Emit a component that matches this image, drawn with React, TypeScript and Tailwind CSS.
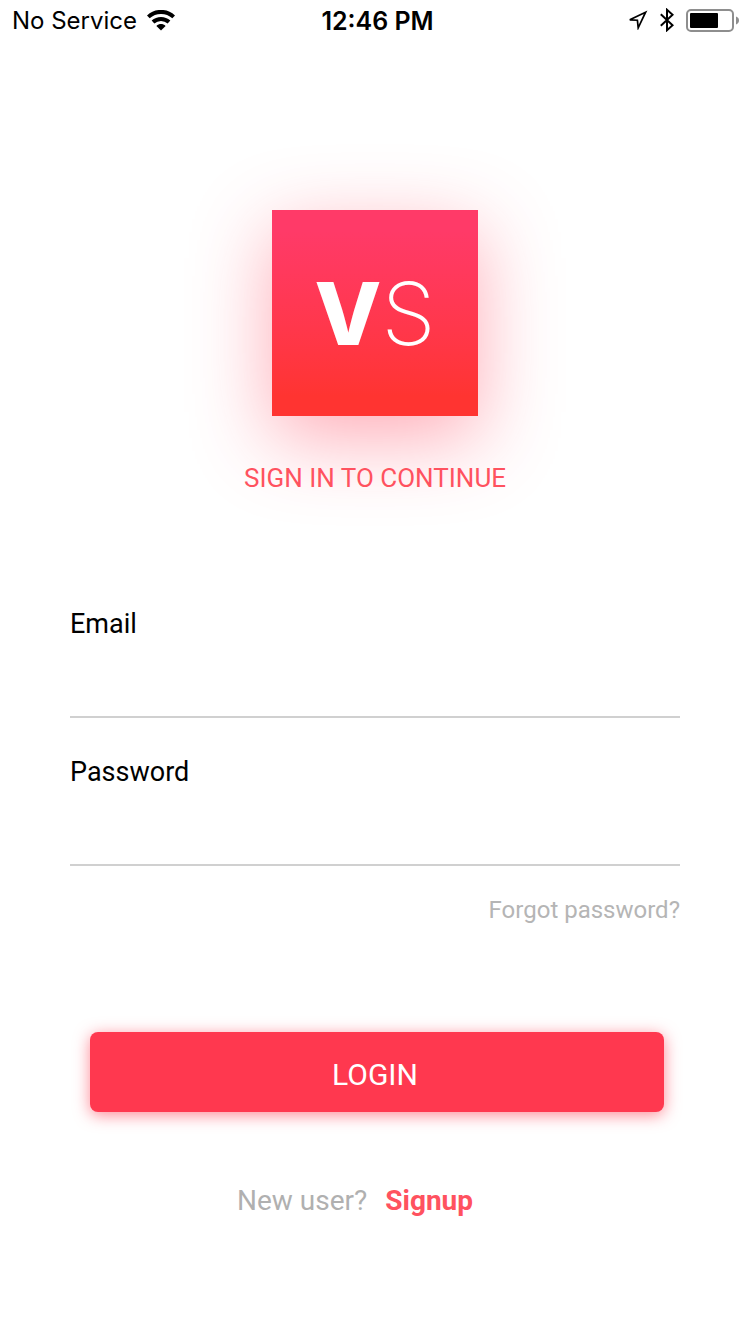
import type { ReactNode } from "react";

function WifiIcon() {
  return (
    <svg width="28" height="21" viewBox="0 0 28 21" aria-hidden="true">
      <g fill="none" stroke="#000" strokeWidth="4">
        <path d="M1.3 6.9C8.5 0.2 19.5 0.2 26.7 6.9" />
        <path d="M6 12.1C10.6 7.9 17.4 7.9 22 12.1" />
      </g>
      <path d="M14 20.4L9.4 16C12.1 13.4 15.9 13.4 18.6 16Z" fill="#000" />
    </svg>
  );
}

function LocationIcon() {
  return (
    <svg width="20" height="20" viewBox="0 0 20 20" aria-hidden="true">
      <path
        d="M17.6 2.2L1.8 9.8L9.4 10.2L10.2 17.8Z"
        fill="none"
        stroke="#000"
        strokeWidth="1.7"
      />
    </svg>
  );
}

function BluetoothIcon() {
  return (
    <svg width="14" height="24" viewBox="0 0 14 24" aria-hidden="true">
      <path
        d="M0.8 6.3L12.6 17.2L7 22.2V1.8L12.6 6.8L0.8 17.7"
        fill="none"
        stroke="#000"
        strokeWidth="2"
      />
    </svg>
  );
}

function BatteryIcon() {
  return (
    <svg width="53" height="24" viewBox="0 0 53 24" aria-hidden="true">
      <rect x="1" y="2" width="46" height="21" rx="4" fill="none" stroke="#8e8e8e" strokeWidth="2" />
      <rect x="4" y="5" width="28" height="15" rx="1" fill="#000" />
      <path d="M50 8.5C52.2 9.2 53 10.8 53 12.5S52.2 15.8 50 16.5Z" fill="#8e8e8e" />
    </svg>
  );
}

function StatusBar() {
  return (
    <header className="grid h-10 grid-cols-[1fr_auto_1fr] items-center pr-[11px] pl-3 font-['Inter','Liberation_Sans',sans-serif] text-2xl text-black">
      <div className="flex items-center gap-2.5">
        <span className="pt-0.5">No Service</span>
        <WifiIcon />
      </div>
      <span className="pt-0.5 pl-1 text-[25px] leading-8 font-semibold">12:46 PM</span>
      <div className="flex items-center justify-end gap-3">
        <LocationIcon />
        <BluetoothIcon />
        <BatteryIcon />
      </div>
    </header>
  );
}

function Logo() {
  return (
    <div className="flex size-[206px] items-center justify-center bg-linear-to-b from-[#ff3a68] from-10% to-[#ff3431] to-90% font-['Inter',sans-serif] text-[87px] leading-none text-white shadow-[0_22px_80px_rgba(255,56,80,0.42)]">
      <span className="font-extrabold">V</span>
      <span className="font-extralight">S</span>
    </div>
  );
}

function Field({ id, type, children }: { id: string; type: string; children: ReactNode }) {
  return (
    <div className="flex flex-col">
      <label htmlFor={id} className="text-[27px] leading-9 text-black">
        {children}
      </label>
      <input
        id={id}
        type={type}
        className="h-[76px] w-full border-b-2 border-[#d0d0d0] bg-transparent text-[27px] outline-none"
      />
    </div>
  );
}

export default function App() {
  return (
    <div className="min-h-screen bg-white font-['Roboto','Liberation_Sans',sans-serif]">
      <StatusBar />
      <main className="px-[70px] pt-[170px] pb-24">
        <div className="flex flex-col items-center gap-11">
          <Logo />
          <h1 className="text-[26px] leading-9 text-[#ff525f]">SIGN IN TO CONTINUE</h1>
        </div>
        <form className="mt-[110px] flex flex-col" onSubmit={(e) => e.preventDefault()}>
          <div className="flex flex-col gap-9">
            <Field id="email" type="email">Email</Field>
            <Field id="password" type="password">Password</Field>
          </div>
          <a href="#forgot" className="mt-[26px] self-end text-[24px] leading-9 text-[#b5b5b5]">
            Forgot password?
          </a>
          <button
            type="submit"
            className="mt-[104px] mr-4 ml-5 h-20 rounded-lg bg-[#ff384f] pt-1.5 pr-1 text-[30px] leading-9 text-white shadow-[0_3px_16px_rgba(255,56,79,0.6)]"
          >
            LOGIN
          </button>
        </form>
        <p className="mt-[71px] flex justify-center gap-[18px] pr-10 text-[28px] leading-9 text-[#b0b0b0]">
          <span>New user?</span>
          <a href="#signup" className="font-bold text-[#ff525f]">Signup</a>
        </p>
      </main>
    </div>
  );
}
